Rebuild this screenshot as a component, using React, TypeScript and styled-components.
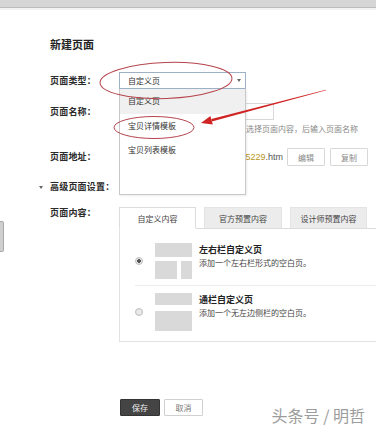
import { createGlobalStyle, styled } from 'styled-components'

const GlobalStyle = createGlobalStyle`
  body {
    margin: 0;
    background: #fff;
    font-family: "Noto Sans CJK SC", "Noto Sans", sans-serif;
    overflow: hidden;
  }
`

const Page = styled.div`
  position: relative;
  width: 376px;
  height: 431px;
  overflow: hidden;
  color: #333;
`

const TopBar = styled.div`
  height: 7px;
  background: #d6d6d6;
  border-bottom: 1px solid #bcbcbc;
  box-shadow: 0 2px 0 #f2f2f2;
`

const SideHandle = styled.div`
  position: absolute;
  left: 0;
  top: 221px;
  width: 3px;
  height: 29px;
  background: #cfcfcf;
  border: 1px solid #a8a8a8;
  border-left: none;
  border-radius: 0 2px 2px 0;
`

const Content = styled.div`
  padding-left: 50px;
`

const Title = styled.div`
  margin-top: 29px;
  font-size: 11px;
  line-height: 14px;
  font-weight: bold;
  color: #222;
`

const Row = styled.div<{ $mt: number; $h: number; $indent?: number }>`
  display: flex;
  align-items: center;
  margin-top: ${(p) => p.$mt}px;
  margin-left: ${(p) => -(p.$indent || 0)}px;
  height: ${(p) => p.$h}px;
`

const TopRow = styled.div<{ $mt: number }>`
  display: flex;
  align-items: flex-start;
  margin-top: ${(p) => p.$mt}px;
`

const Label = styled.div`
  width: 69px;
  flex-shrink: 0;
  font-size: 9px;
  line-height: 12px;
  font-weight: bold;
  letter-spacing: 0.2px;
  color: #2a2a2a;
  white-space: nowrap;
`

const Caret = styled.span`
  width: 0;
  height: 0;
  margin-right: 7px;
  border-left: 2.5px solid transparent;
  border-right: 2.5px solid transparent;
  border-top: 3px solid #666;
`

const SelectWrap = styled.div`
  position: relative;
  width: 127px;
  height: 17px;
`

const SelectBox = styled.div`
  box-sizing: border-box;
  display: flex;
  align-items: center;
  height: 17px;
  padding-left: 8px;
  border: 1px solid #9fb1c7;
  background: #fff;
  font-size: 8px;
  color: #333;
`

const SelectArrow = styled.span`
  margin-left: auto;
  margin-right: 4px;
  width: 0;
  height: 0;
  border-left: 2.5px solid transparent;
  border-right: 2.5px solid transparent;
  border-top: 3px solid #666;
`

const Dropdown = styled.ul`
  position: absolute;
  top: 17px;
  left: 0;
  z-index: 2;
  box-sizing: border-box;
  width: 127px;
  height: 106px;
  margin: 0;
  padding: 0;
  list-style: none;
  background: #fff;
  border: 1px solid #c9c9c9;
  border-top: none;
  box-shadow: 1px 1px 2px rgba(0, 0, 0, 0.08);
`

const Option = styled.li<{ $active?: boolean }>`
  height: 24.5px;
  line-height: 24.5px;
  padding-left: 8px;
  font-size: 8px;
  color: #333;
  background: ${(p) => (p.$active ? '#f0f0f0' : 'transparent')};
`

const TextInput = styled.div`
  box-sizing: border-box;
  width: 155px;
  height: 17px;
  border: 1px solid #d8d8d8;
  background: #fff;
`

const Hint = styled.div`
  margin: 3px 0 0 69px;
  width: 239px;
  text-align: right;
  font-size: 8px;
  line-height: 12px;
  color: #888;
  white-space: nowrap;
`

const Address = styled.div`
  width: 164px;
  text-align: right;
  font-family: "Liberation Sans", Arial, sans-serif;
  font-size: 9px;
  color: #555;
  white-space: nowrap;
  overflow: hidden;
`

const AddressNum = styled.span`
  color: #b8961e;
`

const SmallButton = styled.button<{ $ml: number }>`
  box-sizing: border-box;
  width: 38px;
  height: 18px;
  margin-left: ${(p) => p.$ml}px;
  padding: 0;
  border: 1px solid #d8d8d8;
  border-radius: 1px;
  background: #fff;
  font-family: inherit;
  font-size: 8px;
  color: #888;
`

const ContentArea = styled.div`
  display: flex;
  flex-direction: column;
`

const TabStrip = styled.div`
  display: flex;
  align-items: flex-end;
  gap: 8px;
  height: 21px;
  width: 300px;
  border-bottom: 1px solid #dcdcdc;
`

const Tab = styled.div<{ $active?: boolean; $w: number }>`
  box-sizing: border-box;
  width: ${(p) => p.$w}px;
  height: ${(p) => (p.$active ? 22 : 21)}px;
  margin-bottom: ${(p) => (p.$active ? -1 : 0)}px;
  display: flex;
  align-items: center;
  justify-content: center;
  font-size: 8px;
  color: #444;
  background: ${(p) => (p.$active ? '#fff' : '#ececec')};
  border: 1px solid ${(p) => (p.$active ? '#dcdcdc' : '#e4e4e4')};
  border-bottom: ${(p) => (p.$active ? '1px solid #fff' : 'none')};
`

const Panel = styled.div`
  box-sizing: border-box;
  width: 300px;
  padding-bottom: 10px;
  border: 1px solid #e2e2e2;
  border-top: none;
`

const Item = styled.div<{ $pt: number; $pb: number; $divider?: boolean }>`
  display: flex;
  align-items: center;
  margin-left: 15px;
  padding-top: ${(p) => p.$pt}px;
  padding-bottom: ${(p) => p.$pb}px;
  border-bottom: ${(p) => (p.$divider ? '1px solid #ececec' : 'none')};
`

const Radio = styled.span<{ $checked?: boolean }>`
  box-sizing: border-box;
  width: 8px;
  height: 8px;
  margin-right: 12px;
  flex-shrink: 0;
  border-radius: 50%;
  border: 1px solid #bdbdbd;
  background: radial-gradient(
    circle,
    ${(p) => (p.$checked ? '#555 0 1.6px, #e6e6e6 2px' : '#eee 0, #e0e0e0 100%')}
  );
`

const Thumb = styled.div`
  display: flex;
  flex-direction: column;
  width: 37px;
  flex-shrink: 0;
  margin-right: 7px;
`

const Block = styled.div<{ $h: number }>`
  height: ${(p) => p.$h}px;
  background: #d9d9d9;
`

const BlockRow = styled.div<{ $mt: number }>`
  display: flex;
  gap: 4px;
  margin-top: ${(p) => p.$mt}px;
`

const SideBlock = styled.div<{ $w: number; $h: number }>`
  width: ${(p) => p.$w}px;
  height: ${(p) => p.$h}px;
  background: #d9d9d9;
`

const ItemText = styled.div`
  align-self: flex-start;
  display: flex;
  flex-direction: column;
`

const ItemTitle = styled.div`
  font-size: 9px;
  line-height: 13px;
  font-weight: bold;
  color: #222;
`

const ItemDesc = styled.div`
  font-size: 8px;
  line-height: 13px;
  color: #444;
`

const Footer = styled.div`
  display: flex;
  gap: 4px;
  margin: 57px 0 0 70px;
`

const FooterButton = styled.button<{ $primary?: boolean }>`
  box-sizing: border-box;
  width: ${(p) => (p.$primary ? 40 : 39)}px;
  height: 17px;
  padding: 0;
  font-family: inherit;
  font-size: 8px;
  border-radius: 1px;
  color: ${(p) => (p.$primary ? '#eee' : '#777')};
  background: ${(p) => (p.$primary ? '#444' : '#fff')};
  border: 1px solid ${(p) => (p.$primary ? '#333' : '#d0d0d0')};
`

const Watermark = styled.div`
  position: absolute;
  right: 11px;
  top: 405px;
  font-size: 16px;
  line-height: 20px;
  color: #9c9c9c;
  white-space: nowrap;
`

const Annotations = styled.svg`
  position: absolute;
  left: 0;
  top: 0;
  z-index: 3;
  pointer-events: none;
`

function App() {
  return (
    <>
      <GlobalStyle />
      <Page>
        <TopBar />
        <SideHandle />
        <Content>
          <Title>新建页面</Title>

          <Row $mt={21} $h={17}>
            <Label>页面类型：</Label>
            <SelectWrap>
              <SelectBox>
                自定义页
                <SelectArrow />
              </SelectBox>
              <Dropdown>
                <Option $active>自定义页</Option>
                <Option>宝贝详情模板</Option>
                <Option>宝贝列表模板</Option>
              </Dropdown>
            </SelectWrap>
          </Row>

          <Row $mt={14} $h={17}>
            <Label>页面名称：</Label>
            <TextInput />
          </Row>
          <Hint>请先选择页面内容，后输入页面名称</Hint>

          <Row $mt={13} $h={18}>
            <Label>页面地址：</Label>
            <Address>
              /p/rd<AddressNum>5229</AddressNum>.htm
            </Address>
            <SmallButton $ml={4}>编辑</SmallButton>
            <SmallButton $ml={5}>复制</SmallButton>
          </Row>

          <Row $mt={15} $h={12} $indent={11}>
            <Caret />
            <Label>高级页面设置：</Label>
          </Row>

          <TopRow $mt={14}>
            <Label>页面内容：</Label>
            <ContentArea>
              <TabStrip>
                <Tab $active $w={77}>自定义内容</Tab>
                <Tab $w={78}>官方预置内容</Tab>
                <Tab $w={77}>设计师预置内容</Tab>
              </TabStrip>
              <Panel>
                <Item $pt={14} $pb={6} $divider>
                  <Radio $checked />
                  <Thumb>
                    <Block $h={14} />
                    <BlockRow $mt={4}>
                      <SideBlock $w={22} $h={18} />
                      <SideBlock $w={11} $h={18} />
                    </BlockRow>
                  </Thumb>
                  <ItemText>
                    <ItemTitle>左右栏自定义页</ItemTitle>
                    <ItemDesc>添加一个左右栏形式的空白页。</ItemDesc>
                  </ItemText>
                </Item>
                <Item $pt={7} $pb={0}>
                  <Radio />
                  <Thumb>
                    <Block $h={12} />
                    <BlockRow $mt={6}>
                      <SideBlock $w={37} $h={20} />
                    </BlockRow>
                  </Thumb>
                  <ItemText>
                    <ItemTitle>通栏自定义页</ItemTitle>
                    <ItemDesc>添加一个无左边侧栏的空白页。</ItemDesc>
                  </ItemText>
                </Item>
              </Panel>
            </ContentArea>
          </TopRow>

          <Footer>
            <FooterButton $primary>保存</FooterButton>
            <FooterButton>取消</FooterButton>
          </Footer>
        </Content>

        <Watermark>头条号 / 明哲</Watermark>

        <Annotations width="376" height="431" viewBox="0 0 376 431">
          <ellipse
            cx="166"
            cy="80.5"
            rx="66"
            ry="18"
            fill="none"
            stroke="#b5444c"
            strokeWidth="1"
            transform="rotate(-2 166 80.5)"
          />
          <ellipse
            cx="154"
            cy="127.5"
            rx="40"
            ry="11"
            fill="none"
            stroke="#b5444c"
            strokeWidth="1"
          />
          <polygon
            points="211.9,121.4 326.1,90.3 325.9,89.7 211.3,119.0"
            fill="#d02424"
          />
          <polygon points="201,123 212.8,124.6 210.4,115.9" fill="#d02424" />
        </Annotations>
      </Page>
    </>
  )
}

export default App
